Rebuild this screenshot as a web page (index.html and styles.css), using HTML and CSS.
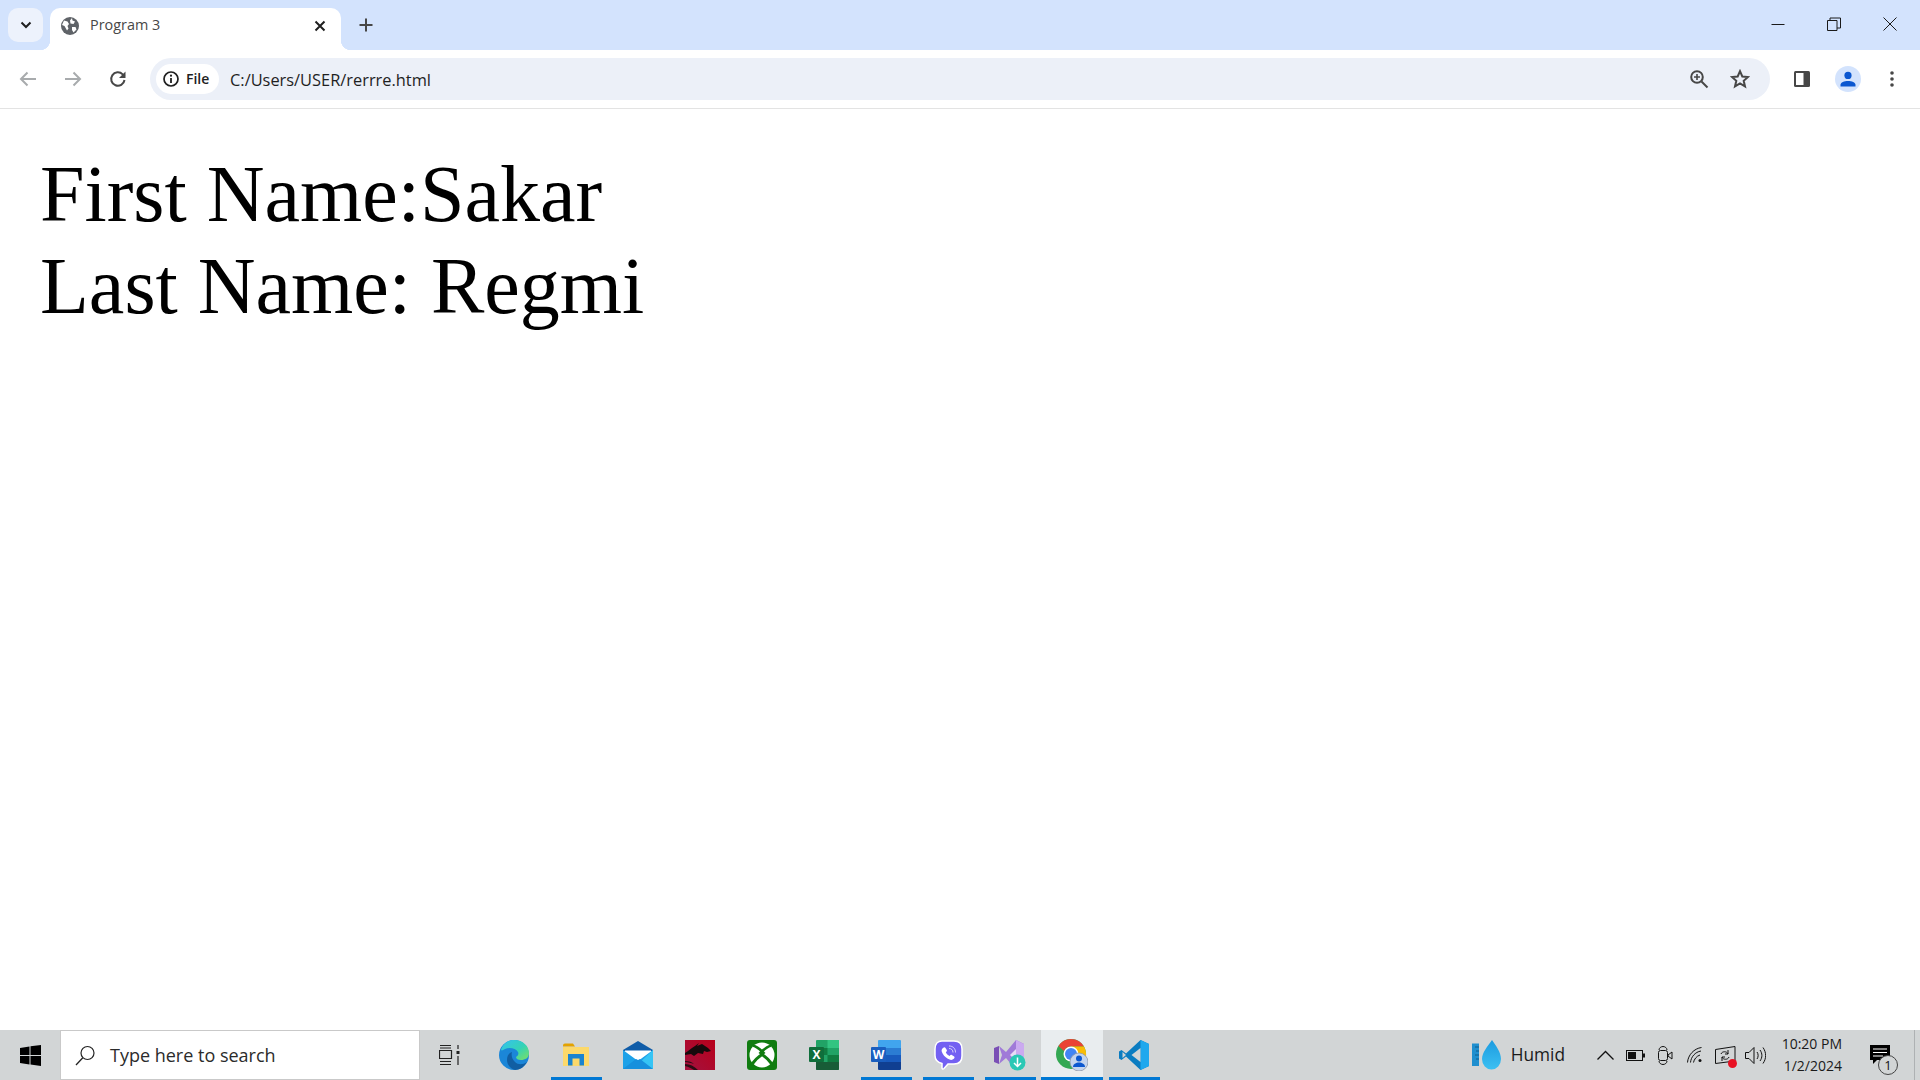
FILE: index.html
```html
<!DOCTYPE html>
<html lang="en">
<head>
<meta charset="utf-8">
<title>Program 3</title>
<link rel="stylesheet" href="styles.css">
</head>
<body>
<div class="window">
  <header class="tabstrip">
    <div class="tab-search">
      <svg width="12" height="8" viewBox="0 0 12 8"><path d="M1.500 1.500 6 6l4.500-4.500" fill="none" stroke="#1f1f1f" stroke-width="2"/></svg>
    </div>
    <div class="tab">
      <svg class="favicon" width="18" height="18" viewBox="0 0 18 18"><circle cx="9" cy="9" r="9" fill="#5f6368"/><path d="M3 3.500 6.500 4.500 8 7 6.500 9 7.500 11.500 6 13.500 3.500 9 1 8Zm8-2.500 .5 2.500 2.500 1-1.500 2.500-3-.5-.5-3ZM11 10h3.500l1 2.500-3 3-1.500-2.500Z" fill="#fff"/></svg>
      <span class="tab-title">Program 3</span>
      <svg class="tab-close" width="12" height="12" viewBox="0 0 12 12"><path d="M1.500 1.500l9 9m0-9-9 9" stroke="#1f1f1f" stroke-width="2" fill="none"/></svg>
    </div>
    <svg class="new-tab" width="14" height="14" viewBox="0 0 14 14"><path d="M7 .5v13M.5 7h13" stroke="#474747" stroke-width="2"/></svg>
    <div class="caption">
      <svg class="cap" width="14" height="14" viewBox="0 0 14 14"><path d="M.5 7.500h13" stroke="#1a1a1a" stroke-width="1"/></svg>
      <svg class="cap" width="14" height="14" viewBox="0 0 14 14"><path d="M.5 3.500h9.500v10H.5ZM3 3.500V1h10.500v10H10" fill="none" stroke="#1a1a1a" stroke-width="1"/></svg>
      <svg class="cap" width="14" height="14" viewBox="0 0 14 14"><path d="m.5.500 13 13m0-13-13 13" fill="none" stroke="#1a1a1a" stroke-width="1"/></svg>
    </div>
  </header>

  <nav class="toolbar">
    <div class="nav-group">
      <svg width="18" height="16" viewBox="0 0 18 16"><path d="M17 8H2m6.500-6.500L2 8l6.500 6.500" fill="none" stroke="#a8abad" stroke-width="2"/></svg>
      <svg width="18" height="16" viewBox="0 0 18 16"><path d="M1 8h15M9.500 1.500 16 8l-6.500 6.500" fill="none" stroke="#a8abad" stroke-width="2"/></svg>
      <svg width="18" height="18" viewBox="0 0 18 18"><path d="M15.500 10a6.700 6.700 0 1 1-1.800-5.600L15.500 6.500" fill="none" stroke="#474747" stroke-width="2"/><path d="M16.500 1.500v6.500H10Z" fill="#474747"/></svg>
    </div>
    <div class="omnibox">
      <div class="chip">
        <svg width="16" height="16" viewBox="0 0 16 16"><circle cx="8" cy="8" r="7" fill="none" stroke="#1f1f1f" stroke-width="1.700"/><path d="M8 7v5" stroke="#1f1f1f" stroke-width="1.800"/><circle cx="8" cy="4.700" r="1.100" fill="#1f1f1f"/></svg>
        <span>File</span>
      </div>
      <span class="url">C:/Users/USER/rerrre.html</span>
      <svg class="omni-zoom" width="20" height="20" viewBox="0 0 20 20"><circle cx="8" cy="8" r="5.800" fill="none" stroke="#474747" stroke-width="2"/><path d="M12.500 12.500 18.500 18.500" stroke="#474747" stroke-width="2"/><path d="M8 5v6M5 8h6" stroke="#474747" stroke-width="1.600"/></svg>
      <svg class="omni-star" width="20" height="20" viewBox="0 0 20 20"><path d="m10 2.200 2.300 5.300 5.700.5-4.300 3.800 1.300 5.600-5-3-5 3 1.300-5.600L2 8l5.700-.5Z" fill="none" stroke="#474747" stroke-width="2"/></svg>
    </div>
    <div class="tools">
      <svg width="18" height="18" viewBox="0 0 18 18"><rect x="1" y="1" width="16" height="16" rx="1.500" fill="#474747"/><rect x="3" y="3" width="7.500" height="12" fill="#fff"/></svg>
      <div class="avatar">
        <svg width="16" height="16" viewBox="0 0 16 16"><circle cx="8" cy="4.400" r="3.600" fill="#0b57d0"/><path d="M.5 15.500v-1.800c0-2.300 3.800-3.700 7.500-3.700s7.500 1.400 7.500 3.700v1.800Z" fill="#0b57d0"/></svg>
      </div>
      <svg width="4" height="18" viewBox="0 0 4 18"><circle cx="2" cy="3" r="1.800" fill="#474747"/><circle cx="2" cy="9" r="1.800" fill="#474747"/><circle cx="2" cy="15" r="1.800" fill="#474747"/></svg>
    </div>
  </nav>

  <main class="page">
    <p class="line">First Name:Sakar</p>
    <p class="line">Last Name: Regmi</p>
  </main>

  <footer class="taskbar">
    <div class="start">
      <svg width="21" height="21" viewBox="0 0 21 21"><path d="M0 3 9.500 1.500v8.500H0Zm10.500-1.700L21 0v10H10.500ZM0 11h9.500v8.500L0 18Zm10.500 0H21v10l-10.500-1.500Z" fill="#000"/></svg>
    </div>
    <div class="search">
      <svg width="21" height="21" viewBox="0 0 21 21"><circle cx="12.500" cy="8" r="6.500" fill="none" stroke="#222" stroke-width="1.200"/><path d="M7.800 12.700 1 20" stroke="#222" stroke-width="1.300"/></svg>
      <span>Type here to search</span>
    </div>
    <div class="taskview">
      <svg width="21" height="20" viewBox="0 0 21 20"><path d="M1 .5h11M1 19.500h11M.5 5.500h12v8H.5ZM1 16.500h11M1 3h11" fill="none" stroke="#222" stroke-width="1.200"/><rect x="17.500" y="6" width="3" height="3" fill="#222"/><path d="M19 0v4M19 11v9" stroke="#222" stroke-width="1.200"/></svg>
    </div>
    <div class="apps">
      <div class="app">
        <svg width="30" height="30" viewBox="0 0 30 30"><defs><linearGradient id="edgeA" x1="0" y1="0" x2="1" y2="1"><stop offset="0" stop-color="#35c1f1"/><stop offset=".55" stop-color="#34d3b5"/><stop offset="1" stop-color="#7fe060"/></linearGradient></defs><circle cx="15" cy="15" r="15" fill="#1b86d8"/><path d="M2 10C4 3 10 0 15 0c9 0 15 6 15 13 0 5-4 7-8 7-3 0-5-1-5-3 2-1 3-3 2-5-2-4-9-5-13-3-2 1-3 2-4 1Z" fill="url(#edgeA)"/><path d="M13 12c-3 1-5 4-5 8 0 5 4 9 8 10 5 0 9-3 12-8-4 3-9 3-12 0-3-3-4-7-3-10Z" fill="#115ea3"/></svg>
      </div>
      <div class="app running">
        <svg width="28" height="24" viewBox="0 0 28 24"><path d="M1 2.500a2 2 0 0 1 2-2h8l2 3h-12Z" fill="#e3a200"/><path d="M1 4h26v19H1Z" fill="#fcd96b"/><path d="M6 22.500V11h16v11.500h-4.500V15.500h-7v7Z" fill="#1a84d0"/></svg>
      </div>
      <div class="app">
        <svg width="30" height="28" viewBox="0 0 30 28"><path d="M0 9 15 0l15 9v1H0Z" fill="#0f5ca8"/><path d="M2 9.500h26v6L15 21 2 15.500Z" fill="#fff"/><path d="M0 9 15 20 30 9v19H0Z" fill="#1da1e8"/><path d="M30 9v19H10Z" fill="#35c4f5"/><path d="M0 28 13 18l2 1 2-1 13 10Z" fill="#1790dd"/></svg>
      </div>
      <div class="app">
        <svg width="30" height="30" viewBox="0 0 30 30"><defs><linearGradient id="redA" x1="0" y1="1" x2="1" y2="0"><stop offset="0" stop-color="#a3123f"/><stop offset="1" stop-color="#b8001a"/></linearGradient></defs><rect width="30" height="30" fill="url(#redA)"/><path d="M0 13c4-2 6-5 10-7l4-3-2 3 5-2 6 4 3 3-4 1-3-1-1 3-5-1-4 3-3-2-6 1Z" fill="#170a0c"/><path d="M0 24c5 0 9 2 13 6H9c-3-2-5-3-9-4Zm0-3c4 0 7 1 9 3-3-1-6-2-9-2Z" fill="#2a0d14"/></svg>
      </div>
      <div class="app">
        <svg width="30" height="30" viewBox="0 0 30 30"><rect width="30" height="30" rx="3" fill="#107c10"/><circle cx="15" cy="15" r="12.500" fill="#fff"/><path d="M6 5.500C9.500 6.500 12.500 9 15 11.500 17.500 9 20.500 6.500 24 5.500M4.500 25C7.500 20.500 11 17 15 14.500 19 17 22.500 20.500 25.500 25" fill="none" stroke="#107c10" stroke-width="2.800"/><path d="M15 9.500 11.500 13 15 15.500 18.500 13Z" fill="#107c10"/></svg>
      </div>
      <div class="app">
        <svg width="30" height="30" viewBox="0 0 30 30"><path d="M7 1a1 1 0 0 1 1-1h21a1 1 0 0 1 1 1v28a1 1 0 0 1-1 1H8a1 1 0 0 1-1-1Z" fill="#21a366"/><path d="M7 8h11.500v7H7Z" fill="#107c41"/><path d="M18.500 0H29a1 1 0 0 1 1 1v7H18.500Z" fill="#33c481"/><path d="M18.500 15H30v7H18.500Z" fill="#107c41"/><path d="M7 22h23v7a1 1 0 0 1-1 1H8a1 1 0 0 1-1-1Z" fill="#185c37"/><rect y="7" width="15" height="15" rx="1" fill="#0f6e3b"/><text x="7.500" y="19" class="glyph">X</text></svg>
      </div>
      <div class="app running">
        <svg width="30" height="30" viewBox="0 0 30 30"><path d="M7 1a1 1 0 0 1 1-1h21a1 1 0 0 1 1 1v7H7Z" fill="#41a5ee"/><path d="M7 8h23v7H7Z" fill="#2b7cd3"/><path d="M7 15h23v7H7Z" fill="#185abd"/><path d="M7 22h23v7a1 1 0 0 1-1 1H8a1 1 0 0 1-1-1Z" fill="#103f91"/><rect y="7" width="15" height="15" rx="1" fill="#1a5ebf"/><text x="7.500" y="19" class="glyph">W</text></svg>
      </div>
      <div class="app running">
        <svg width="30" height="30" viewBox="0 0 30 30"><path d="M9 1h12c5 0 8 3 8 8v7c0 5-3 8-8 8h-6l-4 4.500c-1 1-2 .5-2-.5v-4.500c-4-1-7-3.500-7-8V9c0-5 3-8 7-8Z" fill="#7360f2" stroke="#fff" stroke-width="1.500"/><path d="M10 8c1-1 2-1 2.500 0l1.300 2c.4 .8 0 1.400-1 2.200.8 1.800 2 3 3.800 3.800.8-1 1.400-1.400 2.200-1l2 1.300c1 .6 1 1.500 0 2.500-1.500 1.500-3.500 1.500-6 0-3-1.800-5-4-6-7-.5-1.500 0-2.800 1.200-3.800Z" fill="#fff"/><path d="M16 6c4 0 6.500 2.500 6.500 6.500M16 8.500c2.500 0 4 1.500 4 4" fill="none" stroke="#d8d2fb" stroke-width="1"/></svg>
      </div>
      <div class="app running">
        <svg width="32" height="32" viewBox="0 0 32 32"><path d="M0 9 5 7v18l-5-2Z" fill="#7a4fb5"/><path d="M5 7l7 6L22 1l8 4v22l-8 4-10-12-7 6 3-9Z" fill="#a07ad8"/><path d="M22 1l8 4v22l-8 4Z" fill="#cbaaf0"/><path d="M22 10v12l-6-6Z" fill="#e8dbf6"/><circle cx="23.500" cy="23.500" r="8" fill="#2bc8b5"/><path d="M23.500 18.500v9m-3.500-3.500 3.500 3.500 3.500-3.500" fill="none" stroke="#fff" stroke-width="1.500"/></svg>
      </div>
      <div class="app running active">
        <svg width="32" height="32" viewBox="0 0 32 32"><circle cx="15" cy="15" r="15" fill="#34a853"/><path d="M15 0a15 15 0 0 1 13 7.500H15a7.500 7.500 0 0 0-7 4.500L2.500 7A15 15 0 0 1 15 0Z" fill="#ea4335"/><path d="M28 7.500a15 15 0 0 1-3 19L19 19a7.500 7.500 0 0 0-4-11.500Z" fill="#fbbc04"/><circle cx="15" cy="15" r="7.500" fill="#fff"/><circle cx="15" cy="15" r="6" fill="#4285f4"/><circle cx="23" cy="23" r="9" fill="#c3d4ee" stroke="#8e98a8" stroke-width=".8"/><circle cx="23" cy="19.500" r="3" fill="#0b57d0"/><path d="M17 28c0-3 3-4.500 6-4.500s6 1.500 6 4.500Z" fill="#0b57d0"/></svg>
      </div>
      <div class="app running">
        <svg width="30" height="30" viewBox="0 0 30 30"><path d="M21.500 0 30 4v22l-8.500 4L7 16.500 2.500 20 0 18.500v-7L2.500 10 7 13.500Z" fill="#0a7cc1"/><path d="M21.500 0 30 4v22l-8.500 4Z" fill="#1fa8ee"/><path d="M21.500 8 12.500 15l9 7Z" fill="#d2d5d6"/><path d="M3.500 12 7 15l-3.500 3Z" fill="#d2d5d6"/></svg>
      </div>
    </div>
    <div class="tray">
      <div class="weather">
        <svg width="30" height="30" viewBox="0 0 30 30"><defs><linearGradient id="dropA" x1="0" y1="0" x2="0" y2="1"><stop offset="0" stop-color="#1c9be0"/><stop offset="1" stop-color="#3cc0f2"/></linearGradient></defs><rect x="0" y="3.500" width="7" height="22.500" fill="#1f8fcf"/><path d="M3 7h4M4 11h3M3 15h4M4 19h3" stroke="#0f5d8e" stroke-width="1"/><path d="M20 0c4 6 9 12 9 19a9.500 10.500 0 0 1-19 0C10 12 16 6 20 0Z" fill="url(#dropA)"/></svg>
        <span>Humid</span>
      </div>
      <div class="tray-icons">
        <div class="tray-cell"><svg width="17" height="10" viewBox="0 0 17 10"><path d="M.5 9.500 8.500 1.500l8 8" fill="none" stroke="#111" stroke-width="1.300"/></svg></div>
        <div class="tray-cell"><svg width="19" height="11" viewBox="0 0 19 11"><rect x=".5" y=".5" width="16" height="10" fill="none" stroke="#111"/><rect x="2" y="2" width="8" height="7" fill="#111"/><rect x="17" y="3.500" width="2" height="4" fill="#111"/></svg></div>
        <div class="tray-cell"><svg width="15" height="19" viewBox="0 0 15 19"><path d="M1 4C1 2 3 .5 5 .5s4 1.500 4 3.500M1 15c0 2 2 3.500 4 3.500s4-1.500 4-3.500" fill="none" stroke="#111"/><rect x=".5" y="4.500" width="9" height="10" rx="2" fill="none" stroke="#111"/><path d="M10 9l4-3v7l-4-3Z" fill="none" stroke="#111"/></svg></div>
        <div class="tray-cell"><svg width="16" height="16" viewBox="0 0 16 16"><path d="M.5 15.500C1 8 7 1.500 14.500.5M3.500 15.500C4 10 8 5 14 4M6.500 15.500C7 12.500 9.500 9 13 8" fill="none" stroke="#111" stroke-width="1"/><circle cx="13" cy="13.500" r="1.500" fill="#111"/></svg></div>
        <div class="tray-cell">
          <div class="tray-alert">
            <svg width="21" height="19" viewBox="0 0 21 19"><path d="M.5 3.500 20 .5v14.500L.5 17.500Z" fill="none" stroke="#111"/><path d="M6 8c1-3 6-3 7 0m1 3c-1 3-6 3-7 0M13 4v4h-3M7 15v-4h3" fill="none" stroke="#111"/></svg>
            <span class="alert-dot"></span>
          </div>
        </div>
        <div class="tray-cell"><svg width="21" height="17" viewBox="0 0 21 17"><path d="M.5 5.500h3.500l5-5v16l-5-5H.500Z" fill="none" stroke="#111"/><path d="M12 5c1.500 2 1.500 5 0 7M15 3c2.500 3.500 2.500 7.500 0 11M18 .5c3.500 5 3.500 11 0 16" fill="none" stroke="#111"/></svg></div>
      </div>
      <div class="clock">
        <span>10:20 PM</span>
        <span>1/2/2024</span>
      </div>
      <div class="notify">
        <svg width="20" height="20" viewBox="0 0 20 20"><path d="M0 0h20v15H7l-4 4v-4H0Z" fill="#000"/><path d="M3 4h14M3 7.500h14M3 11h10" stroke="#fff" stroke-width="1"/></svg>
        <span class="notify-badge">1</span>
      </div>
      <div class="peek"></div>
    </div>
  </footer>
</div>
</body>
</html>
```

FILE: styles.css
```css
* { box-sizing: border-box; }
html, body { margin: 0; height: 100%; }
.window { display: flex; flex-direction: column; height: 1080px; background: #fff; overflow: hidden; }

.tabstrip { display: flex; align-items: flex-start; height: 50px; flex: none; background: #d3e3fd; padding: 8px 0 0 8px; }
.tab-search { width: 35px; height: 34px; border-radius: 10px; background: #edf2fc; display: flex; align-items: center; justify-content: center; }
.tab { position: relative; width: 291px; height: 42px; margin-left: 7px; background: #fff; border-radius: 10px 10px 0 0; display: flex; align-items: center; padding: 0 0 0 11px; }
.tab::before, .tab::after { content: ""; position: absolute; bottom: 0; width: 10px; height: 10px; }
.tab::before { left: -10px; background: radial-gradient(circle at 0 0, transparent 10px, #fff 10.500px); }
.tab::after { right: -10px; background: radial-gradient(circle at 100% 0, transparent 10px, #fff 10.500px); }
.favicon { flex: none; position: relative; top: -3px; }
.tab-title { margin-left: 11px; font: 14.400px/18px "Open Sans", sans-serif; color: #474747; position: relative; top: -4px; }
.tab-close { margin-left: auto; margin-right: 15px; position: relative; top: -3px; }
.new-tab { margin: 10px 0 0 18px; }
.caption { margin-left: auto; display: flex; gap: 42px; padding: 9px 23px 0 0; }
.cap { display: block; }

.toolbar { display: flex; align-items: center; height: 59px; flex: none; background: #fff; border-radius: 8px 8px 0 0; border-bottom: 1px solid #e3e3e3; padding: 0 8px 1px 0; }
.nav-group { display: flex; align-items: center; gap: 27px; width: 150px; padding-left: 19px; flex: none; }
.omnibox { flex: 1; height: 42px; border-radius: 21px; background: #ecf0f8; display: flex; align-items: center; padding: 0 20px 0 6px; }
.chip { height: 30px; width: 63px; border-radius: 15px; background: #fff; display: flex; align-items: center; gap: 7px; padding-left: 7px; font: 600 14px/16px "Open Sans", sans-serif; color: #1f1f1f; flex: none; }
.url { margin-left: 11px; font: 16.400px/20px "Open Sans", sans-serif; color: #1f1f1f; position: relative; top: 1px; }
.omni-zoom { margin-left: auto; }
.omni-star { margin-left: 21px; }
.tools { display: flex; align-items: center; width: 142px; flex: none; padding-left: 23px; }
.tools > svg:first-child { margin-right: 24px; }
.avatar { width: 26px; height: 26px; border-radius: 50%; background: #d3e3fd; display: flex; align-items: center; justify-content: center; margin-right: 29px; }

.page { flex: 1; padding: 39px 0 0 40px; }
.line { margin: 0; font: 80px/92px "Liberation Serif", "Times New Roman", serif; color: #000; }

.taskbar { display: flex; align-items: stretch; height: 50px; flex: none; background: #d2d5d6; }
.start { width: 60px; display: flex; align-items: center; justify-content: center; }
.search { width: 360px; background: #fff; border: 1px solid #c9c9c9; display: flex; align-items: center; padding-left: 14px; gap: 14px; font: 18px/24px "Open Sans", sans-serif; color: #2b2b2b; }
.taskview { width: 63px; display: flex; align-items: center; justify-content: center; padding-right: 4px; }
.apps { display: flex; }
.app { position: relative; width: 62px; display: flex; align-items: center; justify-content: center; }
.app.running::after { content: ""; position: absolute; left: 6px; right: 5px; bottom: 0; height: 3px; background: #0078d4; }
.app.active { background: #e9edef; }
.app.active::after { left: 0; right: 0; }
.glyph { font: 700 12px "Open Sans", sans-serif; fill: #fff; text-anchor: middle; }

.tray { margin-left: auto; display: flex; align-items: center; }
.weather { display: flex; align-items: center; gap: 9px; font: 17.300px/24px "Open Sans", sans-serif; color: #1a1a1a; margin-right: 25px; }
.tray-icons { display: flex; align-items: center; width: 182px; }
.tray-cell { width: 30px; display: flex; align-items: center; justify-content: center; }
.tray-alert { position: relative; height: 19px; }
.alert-dot { position: absolute; right: -1px; bottom: -3px; width: 9px; height: 9px; border-radius: 50%; background: #e81123; }
.clock { display: flex; flex-direction: column; align-items: flex-end; width: 70px; font: 14px/22px "Open Sans", sans-serif; color: #1a1a1a; }
.notify { position: relative; width: 72px; height: 50px; display: flex; align-items: center; padding-left: 28px; }
.notify-badge { position: absolute; left: 36px; top: 25px; width: 20px; height: 20px; border-radius: 50%; border: 1px solid #444; background: #d2d5d6; font: 13px/18px "Open Sans", sans-serif; text-align: center; color: #111; }
.peek { width: 6px; height: 50px; border-left: 1px solid #aeb1b3; }
```
